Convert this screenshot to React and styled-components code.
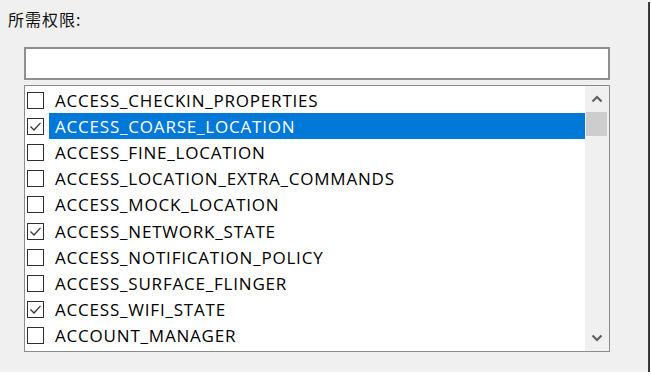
import React from 'react';
import styled, { createGlobalStyle } from 'styled-components';

const GlobalStyle = createGlobalStyle`
  html, body {
    margin: 0;
    padding: 0;
    background: #ffffff;
  }
`;

const Frame = styled.div`
  width: 648px;
  height: 372px;
  background: #f0f0f0;
  box-shadow: 2px 2px 0 #3a3a3a;
  box-sizing: border-box;
  padding: 9px 0 0 8px;
  display: flex;
  flex-direction: column;
`;

const Label = styled.div`
  font-family: "Noto Sans CJK SC", "Noto Sans", sans-serif;
  font-size: 16px;
  line-height: 20px;
  color: #111;
  letter-spacing: 1px;
`;

const TextBox = styled.div`
  margin: 18px 0 0 16px;
  width: 586px;
  height: 33px;
  box-sizing: border-box;
  background: #fff;
  border: 2px solid #8f8f8f;
`;

const ListBox = styled.div`
  margin: 5px 0 0 16px;
  width: 586px;
  height: 267px;
  box-sizing: border-box;
  background: #fff;
  border: 1px solid #8c8c8c;
  display: flex;
`;

const Items = styled.div`
  flex: 1;
  padding-top: 1px;
  display: flex;
  flex-direction: column;
`;

const Row = styled.div`
  height: 26.2px;
  display: flex;
  align-items: center;
  padding-left: 2px;
`;

const Box = styled.div`
  width: 17px;
  height: 17px;
  box-sizing: border-box;
  border: 1px solid #2e2e2e;
  background: #fff;
  display: flex;
  align-items: center;
  justify-content: center;
  flex-shrink: 0;
`;

const Name = styled.div`
  margin-left: 5px;
  flex: 1;
  height: 26px;
  padding-left: 6px;
  display: flex;
  align-items: center;
  font-family: "Open Sans", "Noto Sans", sans-serif;
  font-size: 17px;
  letter-spacing: 0.8px;
  color: ${p => (p.$selected ? '#fff' : '#000')};
  background: ${p => (p.$selected ? '#0078d7' : 'transparent')};
`;

const ScrollBar = styled.div`
  width: 24px;
  background: #f0f0f0;
  display: flex;
  flex-direction: column;
`;

const Arrow = styled.div`
  height: 26px;
  display: flex;
  align-items: center;
  justify-content: center;
`;

const Thumb = styled.div`
  height: 24px;
  margin: 0 2px 0 1px;
  background: #cdcdcd;
`;

const Track = styled.div`
  flex: 1;
`;

const Check = () => (
  <svg width="13" height="13" viewBox="0 0 13 13">
    <path d="M1.5 6.5 L5 10 L11.5 2.8" fill="none" stroke="#333" strokeWidth="1.25" />
  </svg>
);

const Chevron = ({ down }) => (
  <svg width="12" height="8" viewBox="0 0 12 8">
    <path
      d={down ? 'M1.5 1.5 L6 6 L10.5 1.5' : 'M1.5 6.5 L6 2 L10.5 6.5'}
      fill="none"
      stroke="#606060"
      strokeWidth="2.2"
    />
  </svg>
);

const permissions = [
  { name: 'ACCESS_CHECKIN_PROPERTIES', checked: false },
  { name: 'ACCESS_COARSE_LOCATION', checked: true, selected: true },
  { name: 'ACCESS_FINE_LOCATION', checked: false },
  { name: 'ACCESS_LOCATION_EXTRA_COMMANDS', checked: false },
  { name: 'ACCESS_MOCK_LOCATION', checked: false },
  { name: 'ACCESS_NETWORK_STATE', checked: true },
  { name: 'ACCESS_NOTIFICATION_POLICY', checked: false },
  { name: 'ACCESS_SURFACE_FLINGER', checked: false },
  { name: 'ACCESS_WIFI_STATE', checked: true },
  { name: 'ACCOUNT_MANAGER', checked: false },
];

export default function App() {
  return (
    <>
      <GlobalStyle />
      <Frame>
        <Label>所需权限:</Label>
        <TextBox />
        <ListBox>
          <Items>
            {permissions.map(p => (
              <Row key={p.name}>
                <Box>{p.checked && <Check />}</Box>
                <Name $selected={p.selected}>{p.name}</Name>
              </Row>
            ))}
          </Items>
          <ScrollBar>
            <Arrow><Chevron /></Arrow>
            <Thumb />
            <Track />
            <Arrow><Chevron down /></Arrow>
          </ScrollBar>
        </ListBox>
      </Frame>
    </>
  );
}
